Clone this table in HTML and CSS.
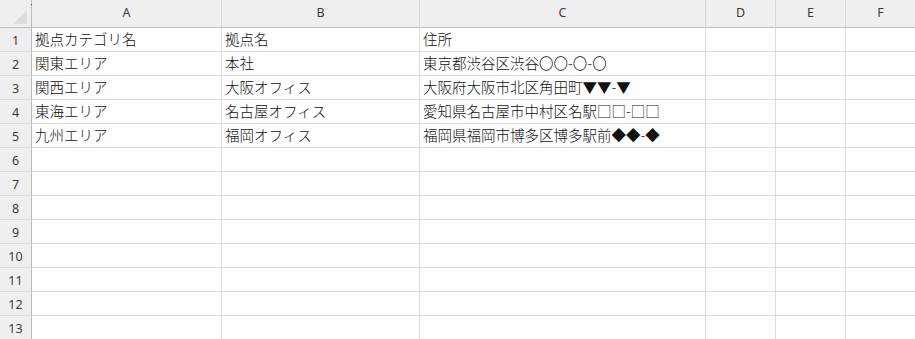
FILE: index.html
```html
<!DOCTYPE html>
<html lang="ja">
<head>
<meta charset="utf-8">
<title>Sheet</title>
<link rel="stylesheet" href="styles.css">
</head>
<body>
<div class="sheet">
  <div class="corner"><span class="tri"></span><span class="dot"></span></div>
  <div class="colh">A</div><div class="colh">B</div><div class="colh">C</div><div class="colh">D</div><div class="colh">E</div><div class="colh">F</div>

  <div class="rowh">1</div><div class="cell">拠点カテゴリ名</div><div class="cell">拠点名</div><div class="cell">住所</div><div class="cell"></div><div class="cell"></div><div class="cell"></div>
  <div class="rowh">2</div><div class="cell">関東エリア</div><div class="cell">本社</div><div class="cell">東京都渋谷区渋谷〇〇-〇-〇</div><div class="cell"></div><div class="cell"></div><div class="cell"></div>
  <div class="rowh">3</div><div class="cell">関西エリア</div><div class="cell">大阪オフィス</div><div class="cell">大阪府大阪市北区角田町▼▼-▼</div><div class="cell"></div><div class="cell"></div><div class="cell"></div>
  <div class="rowh">4</div><div class="cell">東海エリア</div><div class="cell">名古屋オフィス</div><div class="cell">愛知県名古屋市中村区名駅□□-□□</div><div class="cell"></div><div class="cell"></div><div class="cell"></div>
  <div class="rowh">5</div><div class="cell">九州エリア</div><div class="cell">福岡オフィス</div><div class="cell">福岡県福岡市博多区博多駅前◆◆-◆</div><div class="cell"></div><div class="cell"></div><div class="cell"></div>
  <div class="rowh">6</div><div class="cell"></div><div class="cell"></div><div class="cell"></div><div class="cell"></div><div class="cell"></div><div class="cell"></div>
  <div class="rowh">7</div><div class="cell"></div><div class="cell"></div><div class="cell"></div><div class="cell"></div><div class="cell"></div><div class="cell"></div>
  <div class="rowh">8</div><div class="cell"></div><div class="cell"></div><div class="cell"></div><div class="cell"></div><div class="cell"></div><div class="cell"></div>
  <div class="rowh">9</div><div class="cell"></div><div class="cell"></div><div class="cell"></div><div class="cell"></div><div class="cell"></div><div class="cell"></div>
  <div class="rowh">10</div><div class="cell"></div><div class="cell"></div><div class="cell"></div><div class="cell"></div><div class="cell"></div><div class="cell"></div>
  <div class="rowh">11</div><div class="cell"></div><div class="cell"></div><div class="cell"></div><div class="cell"></div><div class="cell"></div><div class="cell"></div>
  <div class="rowh">12</div><div class="cell"></div><div class="cell"></div><div class="cell"></div><div class="cell"></div><div class="cell"></div><div class="cell"></div>
  <div class="rowh">13</div><div class="cell"></div><div class="cell"></div><div class="cell"></div><div class="cell"></div><div class="cell"></div><div class="cell"></div>
</div>
</body>
</html>
```
FILE: styles.css
```css
html, body {
  margin: 0;
  padding: 0;
  background: #ffffff;
  overflow: hidden;
}
.sheet {
  display: grid;
  grid-template-columns: 32px 190px 198px 286px 70px 70px 70px;
  grid-template-rows: 28px repeat(13, 24px);
  width: 916px;
  overflow: hidden;
  font-family: "Noto Sans CJK JP", "Noto Sans", sans-serif;
}
.corner {
  position: relative;
  background: #efefef;
  border-right: 1px solid #bcbcbc;
  border-bottom: 1px solid #bcbcbc;
}
.tri {
  position: absolute;
  left: 13px;
  top: 10px;
  width: 0;
  height: 0;
  border-left: 14px solid transparent;
  border-bottom: 14px solid #dcdcdc;
}
.dot {
  position: absolute;
  left: 31px;
  top: 4px;
  width: 1px;
  height: 1px;
  background: #555555;
}
.colh {
  background: #efefef;
  border-right: 1px solid #d9d9d9;
  border-bottom: 1px solid #bcbcbc;
  display: flex;
  align-items: center;
  justify-content: center;
  padding-bottom: 3px;
  font-family: "Noto Sans", "Open Sans", sans-serif;
  font-size: 12.5px;
  color: #3c3c3c;
}
.rowh {
  background: #efefef;
  border-right: 1px solid #bcbcbc;
  border-bottom: 1px solid #dcdcdc;
  display: flex;
  align-items: center;
  justify-content: center;
  font-family: "Noto Sans", "Open Sans", sans-serif;
  font-size: 12.5px;
  color: #3c3c3c;
  padding-top: 1px;
}
.cell {
  border-right: 1px solid #dcdcdc;
  border-bottom: 1px solid #dcdcdc;
  display: flex;
  align-items: center;
  padding-left: 3px;
  padding-bottom: 3px;
  font-size: 14.5px;
  font-weight: 300;
  color: #111111;
  white-space: nowrap;
  overflow: visible;
}
```
